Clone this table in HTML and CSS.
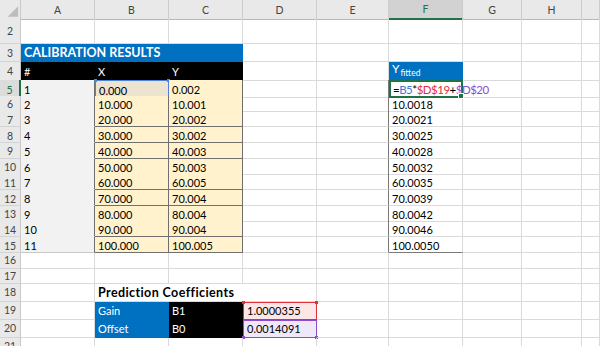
FILE: index.html
```html
<!DOCTYPE html>
<html lang="en">
<head>
    <meta charset="UTF-8">
    <meta name="viewport" content="width=device-width, initial-scale=1.0">
    <title>Calibration Results</title>
    <link rel="stylesheet" href="styles.css">
</head>
<body>
    <div class="sheet">
        <!-- column headers -->
        <div class="row hdr">
            <div class="c corner">
                <svg width="21" height="19" viewBox="0 0 21 19"><polygon points="19,6 19,17 8,17" fill="#bdbdbd"/></svg>
            </div>
            <div class="c ch">A</div>
            <div class="c ch">B</div>
            <div class="c ch">C</div>
            <div class="c ch">D</div>
            <div class="c ch">E</div>
            <div class="c ch sel">F</div>
            <div class="c ch">G</div>
            <div class="c ch">H</div>
            <div class="c ch"></div>
        </div>

        <div class="row r25">
            <div class="c rh">2</div>
            <div class="c"></div><div class="c"></div><div class="c"></div><div class="c"></div>
            <div class="c"></div><div class="c"></div><div class="c"></div><div class="c"></div><div class="c"></div>
        </div>

        <div class="row r18">
            <div class="c rh">3</div>
            <div class="c blue span3 title">CALIBRATION RESULTS</div>
            <div class="c"></div><div class="c"></div><div class="c"></div>
            <div class="c"></div><div class="c"></div><div class="c"></div>
        </div>

        <div class="row r18">
            <div class="c rh">4</div>
            <div class="c black">#</div>
            <div class="c black">X</div>
            <div class="c black">Y</div>
            <div class="c"></div>
            <div class="c"></div>
            <div class="c blue"><span class="yf">Y<sub>fitted</sub></span></div>
            <div class="c"></div><div class="c"></div><div class="c"></div>
        </div>

        <div class="row d">
            <div class="c rh cur">5</div>
            <div class="c gray">1</div>
            <div class="c cream ref-b">0.000</div>
            <div class="c cream">0.002</div>
            <div class="c"></div>
            <div class="c edge"></div>
            <div class="c active"><span class="formula">=<span class="f-b">B5</span>*<span class="f-r">$D$19</span>+<span class="f-p">$D$20</span></span></div>
            <div class="c"></div><div class="c"></div><div class="c"></div>
        </div>

        <div class="row d">
            <div class="c rh">6</div>
            <div class="c gray">2</div>
            <div class="c cream">10.000</div>
            <div class="c cream">10.001</div>
            <div class="c"></div>
            <div class="c edge"></div>
            <div class="c">10.0018</div>
            <div class="c"></div><div class="c"></div><div class="c"></div>
        </div>

        <div class="row d">
            <div class="c rh">7</div>
            <div class="c gray">3</div>
            <div class="c cream">20.000</div>
            <div class="c cream">20.002</div>
            <div class="c"></div>
            <div class="c edge"></div>
            <div class="c">20.0021</div>
            <div class="c"></div><div class="c"></div><div class="c"></div>
        </div>

        <div class="row d">
            <div class="c rh">8</div>
            <div class="c gray">4</div>
            <div class="c cream">30.000</div>
            <div class="c cream">30.002</div>
            <div class="c"></div>
            <div class="c edge"></div>
            <div class="c">30.0025</div>
            <div class="c"></div><div class="c"></div><div class="c"></div>
        </div>

        <div class="row d">
            <div class="c rh">9</div>
            <div class="c gray">5</div>
            <div class="c cream">40.000</div>
            <div class="c cream">40.003</div>
            <div class="c"></div>
            <div class="c edge"></div>
            <div class="c">40.0028</div>
            <div class="c"></div><div class="c"></div><div class="c"></div>
        </div>

        <div class="row d">
            <div class="c rh">10</div>
            <div class="c gray">6</div>
            <div class="c cream">50.000</div>
            <div class="c cream">50.003</div>
            <div class="c"></div>
            <div class="c edge"></div>
            <div class="c">50.0032</div>
            <div class="c"></div><div class="c"></div><div class="c"></div>
        </div>

        <div class="row d">
            <div class="c rh">11</div>
            <div class="c gray">7</div>
            <div class="c cream">60.000</div>
            <div class="c cream">60.005</div>
            <div class="c"></div>
            <div class="c edge"></div>
            <div class="c">60.0035</div>
            <div class="c"></div><div class="c"></div><div class="c"></div>
        </div>

        <div class="row d">
            <div class="c rh">12</div>
            <div class="c gray">8</div>
            <div class="c cream">70.000</div>
            <div class="c cream">70.004</div>
            <div class="c"></div>
            <div class="c edge"></div>
            <div class="c">70.0039</div>
            <div class="c"></div><div class="c"></div><div class="c"></div>
        </div>

        <div class="row d">
            <div class="c rh">13</div>
            <div class="c gray">9</div>
            <div class="c cream">80.000</div>
            <div class="c cream">80.004</div>
            <div class="c"></div>
            <div class="c edge"></div>
            <div class="c">80.0042</div>
            <div class="c"></div><div class="c"></div><div class="c"></div>
        </div>

        <div class="row d">
            <div class="c rh">14</div>
            <div class="c gray">10</div>
            <div class="c cream">90.000</div>
            <div class="c cream">90.004</div>
            <div class="c"></div>
            <div class="c edge"></div>
            <div class="c">90.0046</div>
            <div class="c"></div><div class="c"></div><div class="c"></div>
        </div>

        <div class="row d">
            <div class="c rh">15</div>
            <div class="c gray last">11</div>
            <div class="c cream">100.000</div>
            <div class="c cream">100.005</div>
            <div class="c"></div>
            <div class="c edge"></div>
            <div class="c end">100.0050</div>
            <div class="c"></div><div class="c"></div><div class="c"></div>
        </div>

        <div class="row r16">
            <div class="c rh">16</div>
            <div class="c"></div><div class="c"></div><div class="c"></div><div class="c"></div>
            <div class="c"></div><div class="c"></div><div class="c"></div><div class="c"></div><div class="c"></div>
        </div>

        <div class="row r15">
            <div class="c rh">17</div>
            <div class="c"></div><div class="c"></div><div class="c"></div><div class="c"></div>
            <div class="c"></div><div class="c"></div><div class="c"></div><div class="c"></div><div class="c"></div>
        </div>

        <div class="row r18">
            <div class="c rh">18</div>
            <div class="c"></div>
            <div class="c span2 bold">Prediction Coefficients</div>
            <div class="c"></div><div class="c"></div><div class="c"></div>
            <div class="c"></div><div class="c"></div><div class="c"></div>
        </div>

        <div class="row r18">
            <div class="c rh">19</div>
            <div class="c"></div>
            <div class="c blue">Gain</div>
            <div class="c black">B1</div>
            <div class="c ref-r">1.0000355</div>
            <div class="c"></div><div class="c"></div><div class="c"></div><div class="c"></div><div class="c"></div>
        </div>

        <div class="row r18">
            <div class="c rh">20</div>
            <div class="c"></div>
            <div class="c blue">Offset</div>
            <div class="c black">B0</div>
            <div class="c ref-p">0.0014091</div>
            <div class="c"></div><div class="c"></div><div class="c"></div><div class="c"></div><div class="c"></div>
        </div>

        <div class="row r18">
            <div class="c rh">21</div>
            <div class="c"></div><div class="c"></div><div class="c"></div><div class="c"></div>
            <div class="c"></div><div class="c"></div><div class="c"></div><div class="c"></div><div class="c"></div>
        </div>
    </div>
</body>
</html>
```

FILE: styles.css
```css
*{
    margin: 0;
    padding: 0;
    box-sizing: border-box;
}
body{
    font-family: Lato, "Liberation Sans", sans-serif;
    font-size: 11px;
    color: #000;
    background: #fff;
}
.sheet{
    height: 346px;
    overflow: hidden;
    display: flex;
    flex-direction: column;
}
.row{
    display: grid;
    grid-template-columns: 21px 74px 74px 74px 74px 72px 74px 59px 60px 1fr;
    flex: none;
}
.hdr{ height: 19px; }
.r25{ height: 25px; }
.r18{ height: 18px; }
.r16{ height: 16px; }
.r15{ height: 15px; }
.d{ height: 15.73px; }

/* cell */
.c{
    position: relative;
    display: flex;
    align-items: center;
    padding: 0 3px;
    white-space: nowrap;
    border-right: 1px solid #dadada;
    border-bottom: 1px solid #dadada;
}
.d .c{ padding-top: 2px; }
.span2{ grid-column: span 2; }
.span3{ grid-column: span 3; }

/* headers */
.corner{
    padding: 0;
    background: #e9e9e9;
    border-right-color: #c9c9c9;
    border-bottom-color: #b7b7b7;
}
.ch{
    justify-content: center;
    font-size: 10.5px;
    color: #444;
    background: #e9e9e9;
    border-right-color: #cdcdcd;
    border-bottom-color: #b7b7b7;
}
.ch.sel{
    background: #d2d2d2;
    color: #217346;
    border-bottom: 2px solid #217346;
}
.rh{
    justify-content: center;
    padding-left: 0;
    padding-right: 0;
    font-size: 10.5px;
    color: #444;
    background: #e9e9e9;
    border-right-color: #c9c9c9;
    border-bottom-color: #d3d3d3;
}
.rh.cur{
    background: #dcdcdc;
    color: #217346;
    border-right: 2px solid #217346;
}

/* fills */
.blue{
    background: #0070c0;
    color: #fff;
    border-color: #0070c0;
}
.black{
    background: #000;
    color: #fff;
    border-color: #000;
}
.gray{
    background: #f2f2f2;
    border-bottom-color: #f2f2f2;
    border-right-color: #6f6f6f;
}
.gray.last{ border-bottom-color: #c8c8c8; }
.cream{
    background: #fff2cc;
    border-color: #6f6f6f;
}
.edge{ border-right-color: #7a7a7a; }
.end{ border-bottom-color: #7a7a7a; }

.title{
    font-weight: bold;
    font-size: 12.5px;
}
.bold{
    font-weight: bold;
    font-size: 12.5px;
    letter-spacing: 0.4px;
    border-right-color: transparent;
}
.yf{
    font-size: 12px;
    line-height: 14px;
}
.yf sub{
    font-size: 8.5px;
    vertical-align: -3px;
    margin-left: 1px;
}

/* active cell with formula */
.active{
    z-index: 1;
    border: 2px solid #217346;
    padding-left: 2px;
    padding-top: 1px !important;
}
.active::after{
    content: "";
    position: absolute;
    right: -3px;
    bottom: -3px;
    width: 4px;
    height: 4px;
    background: #217346;
    border: 1px solid #fff;
}
.formula{
    font-size: 11.5px;
    letter-spacing: -0.5px;
}
.f-b{ color: #3f7bd9; }
.f-r{ color: #e0313a; }
.f-p{ color: #8d4ccf; }

/* range finder boxes */
.ref-b{
    background: #ece4d1;
    border: 1px solid #4a82e0;
}
.ref-r{
    background: #fce6e6;
    border: 1px solid #e0313a;
}
.ref-p{
    background: #efe8f8;
    border: 1px solid #8d4ccf;
}
.ref-b::before, .ref-b::after,
.ref-r::before, .ref-r::after,
.ref-p::before, .ref-p::after{
    content: "";
    position: absolute;
    width: 3px;
    height: 3px;
}
.ref-b::before, .ref-r::before{ top: -2px; left: -2px; }
.ref-b::after, .ref-r::after{ top: -2px; right: -2px; }
.ref-p::before{ bottom: -2px; left: -2px; }
.ref-p::after{ bottom: -2px; right: -2px; }
.ref-b::before, .ref-b::after{ background: #4a82e0; }
.ref-r::before, .ref-r::after{ background: #e0313a; }
.ref-p::before, .ref-p::after{ background: #8d4ccf; }
```
